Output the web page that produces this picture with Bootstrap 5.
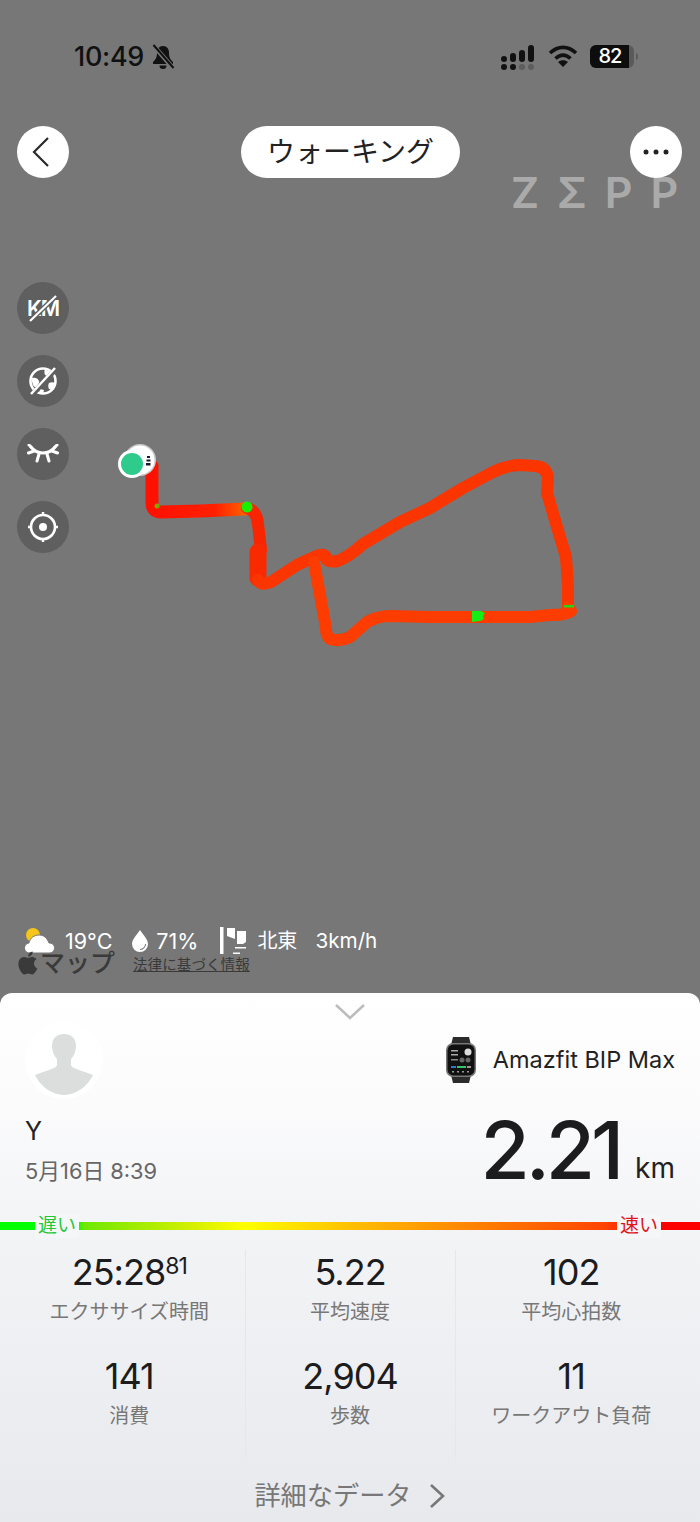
<!DOCTYPE html>
<html lang="ja">
<head>
  <meta charset="UTF-8">
  <title>ウォーキング</title>
  <meta name="viewport" content="width=device-width, initial-scale=1">
  <link href="https://cdn.jsdelivr.net/npm/bootstrap@5.3.0/dist/css/bootstrap.min.css" rel="stylesheet">
  <style>
    body {
      width: 700px;
      height: 1522px;
      overflow: hidden;
      background: #777;
      font-family: Inter, "Noto Sans CJK JP", sans-serif;
      color: #1c1c1e;
    }
    .map-area { position: relative; height: 993px; background: #777; }
    .route-canvas { position: absolute; left: 0; top: 0; }
    .status-row { height: 126px; padding: 40px 62px 0 74px; }
    .clock { font-size: 27px; font-weight: 500; line-height: 34px; color: #111; letter-spacing: -.3px; }
    .bell-icon { margin-left: 7px; }
    .top-row { padding: 0 18px 0 17px; }
    .round-btn { width: 52px; height: 52px; background: #fff; }
    .title-pill { width: 219px; height: 52px; background: #fff; font-size: 28px; color: #222; margin-left: 2px; }
    .back-icon { margin-right: 5px; }
    .zepp-mark {
      position: absolute; left: 511px; top: 168px;
      font-size: 43px; line-height: 48px; font-weight: 600; letter-spacing: 18px;
      color: rgba(255,255,255,.4); white-space: nowrap;
    }
    .side-tools { position: absolute; left: 17px; top: 282px; gap: 21px; }
    .tool-btn { width: 52px; height: 52px; background: #5f5f5f; }
    .map-foot { position: absolute; left: 18px; bottom: 19px; }
    .weather-row { padding-left: 7px; height: 22px; font-size: 21.5px; color: #fff; line-height: 22px; }
    .gap-cloud { margin-right: 10px; }
    .wind-dir { font-size: 20px; margin-left: 9px; }
    .wind-speed { font-size: 20.7px; margin-left: 18px; }
    .gap-drop { margin-left: 19px; margin-right: 7px; }
    .gap-flag { margin-left: 22px; }
    .legal-row { height: 22px; }
    .maps-name { font-size: 25px; line-height: 22px; color: #3a3a3a; font-weight: 500; }
    .legal-link { font-size: 14.600px; line-height: 18px; color: #3a3a3a; text-decoration: underline; margin-left: 18px; margin-top: 4px; }

    .sheet {
      height: 529px;
      position: relative;
      background: linear-gradient(#fff 0, #fbfbfc 110px, #f3f4f6 230px, #e8e9ed 100%);
      border-radius: 12px 12px 0 0;
    }
    .sheet-head { height: 229px; padding: 0 25px; }
    .pull-chev { position: absolute; left: 335px; top: 10px; }
    .avatar-wrap { width: 78px; height: 78px; margin-top: 28px; background: #fff; overflow: hidden; }
    .device-name { font-size: 23.500px; line-height: 30px; color: #222; }
    .device-row { margin-top: 43px; gap: 17px; height: 48px; }
    .user-name { font-size: 25px; line-height: 30px; color: #222; margin-top: 17px; }
    .run-date { font-size: 21.800px; line-height: 28px; color: #666; margin-top: 11px; }
    .distance { font-size: 80px; line-height: 80px; font-weight: 500; letter-spacing: -4.100px; color: #1c1c1e; }
    .distance-unit { font-size: 28px; line-height: 30px; margin-left: 15px; margin-bottom: 7px; color: #222; }
    .dist-row { margin-top: 26px; }
    .speed-bar {
      position: relative; height: 8px;
      background: linear-gradient(90deg, #0f0 0, #0f0 11%, #6fe800 12%, #d8f000 28%, #ff0 35%, #ffc000 50%, #ff7a00 70%, #ff4500 86%, #f00 94%, #f00 100%);
    }
    .speed-tag {
      position: absolute; top: -8px; height: 24px; line-height: 24px; font-size: 19px; padding: 0 3px;
      background: #f5f6f7; border-radius: 3px;
    }
    .stat-grid {
      display: grid; grid-template-columns: 1fr 210px 1fr;
      padding: 20px 13px 0 14px; height: 228px;
    }
    .stat-col { border-right: 1px solid #e6e7ea; }
    .stat-col:last-child { border-right: 0; }
    .stat-item { height: 104px; }
    .stat-num { font-size: 36px; line-height: 44px; color: #1c1c1e; letter-spacing: -1px; }
    .stat-num sup { font-size: 23px; top: -.5em; line-height: 0; margin-left: 0; }
    .stat-label { font-size: 20px; line-height: 28px; color: #777; margin-top: 4px; }
    .more-link { font-size: 26.200px; line-height: 36px; color: #777; gap: 16px; margin-top: 20px; }
  </style>
</head>
<body>

<div class="map-area">
  <!-- route -->
  <svg class="route-canvas" width="700" height="993" viewBox="0 0 700 993" fill="none">
    <defs>
      <linearGradient id="routeFirst" gradientUnits="userSpaceOnUse" x1="150" y1="0" x2="250" y2="0">
        <stop offset="0" stop-color="#ff1000"/><stop offset=".65" stop-color="#ff2000"/><stop offset="1" stop-color="#ff6a00"/>
      </linearGradient>
    </defs>
    <g stroke-linecap="round" stroke-linejoin="round">
      <path d="M152 466 L152 503 Q152 512 161 512 L200 511 L245 509" stroke="url(#routeFirst)" stroke-width="13"/>
      <path d="M247 508 Q257 511 258 524 L261 550" stroke="#f92400" stroke-width="12"/>
      <path d="M258 552 L258 578" stroke="#f92a00" stroke-width="17"/>
      <path d="M258 580 Q261 586 271 582 L297 565 L312 558 Q323 552 326 557 Q326 563 338 561 Q350 556 363 544 L400 522 L430 508 L463 488 L493 472 Q508 465 520 465 L535 466 Q547 467 548 478 L547 493 L557 527 L566 557 L568 585 L568 607" stroke="#fb3500" stroke-width="12"/>
      <path d="M568 607 L571 611 Q567 615 550 615 L530 617 L477 617 L430 617 L390 616 Q378 616 367 622 L350 637 Q340 642 330 639 Q326 636 326 628 L320 595 L314 562" stroke="#fc3c00" stroke-width="12"/>
    </g>
    <circle cx="247" cy="507" r="5.500" fill="#19f000"/>
    <circle cx="157" cy="506" r="2.500" fill="#7ea800"/>
    <path d="M472 611h9l4 2-2 3 1 3-4 2-8 1z" fill="#14ee14"/>
    <path d="M564 605h10v2.500h-10z" fill="#22d814"/>
    <circle cx="140" cy="460" r="16" fill="#c9c9c9"/>
    <circle cx="140" cy="460" r="14.500" fill="#fff"/>
    <path d="M147 456h3v2h-3zM146.500 459.500h4v2h-4zM146 463h4.500v2.500H146z" fill="#1a1a2a"/>
    <circle cx="132" cy="464" r="14" fill="#fff"/>
    <circle cx="132" cy="464" r="11" fill="#2ecb8c"/>
  </svg>

  <!-- status bar -->
  <div class="status-row d-flex justify-content-between position-relative">
    <div class="d-flex align-items-start">
      <span class="clock">10:49</span>
      <svg width="24" height="26" viewBox="0 0 24 26" class="bell-icon mt-1" fill="#111">
        <path d="M12 2c-4 0-6 3-6 7 0 5-2 7-4 9v2h20v-2c-2-2-4-4-4-9 0-4-2-7-6-7z"/>
        <path d="M8.500 21.500a3.500 3.500 0 0 0 7 0z"/>
        <path d="M2 1l20 23" stroke="#777" stroke-width="4.500"/>
        <path d="M2.500 1l20 23" stroke="#111" stroke-width="2"/>
      </svg>
    </div>
    <div class="d-flex align-items-start gap-2">
      <svg width="36" height="26" viewBox="0 0 36 26" class="mt-1 me-1" fill="#111">
        <rect x="1" y="12" width="6" height="6" rx="3"/><rect x="10" y="9" width="6" height="9" rx="3"/>
        <rect x="19" y="6" width="6" height="12" rx="3"/><rect x="28" y="1" width="6" height="17" rx="3"/>
        <rect x="1" y="20" width="6" height="6" rx="3"/><rect x="10" y="20" width="6" height="6" rx="3"/>
        <rect x="19" y="20" width="6" height="6" rx="3" fill="#5d5d5d"/><rect x="28" y="20" width="6" height="6" rx="3" fill="#5d5d5d"/>
      </svg>
      <svg width="30" height="24" viewBox="0 0 30 24" class="mt-1" fill="none" stroke="#111" stroke-width="3.600">
        <path d="M2 9c8-7.500 18-7.500 26 0"/><path d="M7.500 14.500c5-4.500 10-4.500 15 0"/>
        <path d="M15 23l-5-5c3-2.500 7-2.500 10 0z" fill="#111" stroke="none"/>
      </svg>
      <svg width="48" height="24" viewBox="0 0 48 24" class="ms-1 mt-1">
        <rect x="0" y="1" width="44" height="23" rx="6" fill="#5a5a5a"/>
        <path d="M6 1h33v23H6a6 6 0 0 1-6-6V7a6 6 0 0 1 6-6z" fill="#0d0d0d"/>
        <path d="M46 9c1.500.5 2 2 2 3.500s-.5 3-2 3.500z" fill="#5a5a5a"/>
        <text x="20" y="19" text-anchor="middle" font-family="Inter, sans-serif" font-size="20" font-weight="500" letter-spacing="-1" fill="#fff">82</text>
      </svg>
    </div>
  </div>

  <!-- top buttons -->
  <div class="top-row d-flex justify-content-between align-items-center">
    <div class="round-btn rounded-circle d-flex align-items-center justify-content-center">
      <svg width="20" height="32" viewBox="0 0 20 32" class="back-icon" fill="none" stroke="#2a2a2a" stroke-width="2.200"><path d="M17 2 3 16l14 14"/></svg>
    </div>
    <div class="title-pill rounded-pill d-flex align-items-center justify-content-center">ウォーキング</div>
    <div class="round-btn rounded-circle d-flex align-items-center justify-content-center">
      <svg width="26" height="6" viewBox="0 0 26 6" fill="#222"><circle cx="3" cy="3" r="2.500"/><circle cx="13" cy="3" r="2.500"/><circle cx="23" cy="3" r="2.500"/></svg>
    </div>
  </div>
  <div class="zepp-mark">ZΣPP</div>

  <!-- left tools -->
  <div class="side-tools d-flex flex-column">
    <div class="tool-btn rounded-circle d-flex align-items-center justify-content-center">
      <svg width="32" height="30" viewBox="0 0 32 30">
        <text x="16" y="23" text-anchor="middle" font-family="Inter, sans-serif" font-size="21" font-weight="600" letter-spacing="-1" fill="#fff">KM</text>
        <path d="M3 28 29 3" stroke="#5f5f5f" stroke-width="5"/>
        <path d="M3 28 29 3" stroke="#fff" stroke-width="2.200"/>
      </svg>
    </div>
    <div class="tool-btn rounded-circle d-flex align-items-center justify-content-center">
      <svg width="32" height="32" viewBox="0 0 32 32" fill="none">
        <circle cx="16" cy="16" r="12.500" stroke="#fff" stroke-width="2.600"/>
        <path d="M4 13c4-1 7 0 8 3 1 2-1 3-2 5-1 2-3 1-4-1zM18 4c-1 3-1 6 2 7 2 1 5 0 7-2zM22 18c2-1 4-1 6 0l-3 7-3-1c-1-2-1-4 0-6zM13 24l4 1-1 4-4-1z" fill="#fff"/>
        <path d="M5 30 29 4" stroke="#5f5f5f" stroke-width="5"/>
        <path d="M4 29 28 3" stroke="#fff" stroke-width="2.500"/>
      </svg>
    </div>
    <div class="tool-btn rounded-circle d-flex align-items-center justify-content-center">
      <svg width="32" height="20" viewBox="0 0 32 20" fill="none" stroke="#fff" stroke-width="3" stroke-linecap="round">
        <path d="M4 3c6 8 18 8 24 0"/>
        <path d="M4 3 2 1M7 7 1.500 9M12 10l-2 7M20 10l2 7M25 7l5.500 2M28 3l2-2"/>
      </svg>
    </div>
    <div class="tool-btn rounded-circle d-flex align-items-center justify-content-center">
      <svg width="32" height="32" viewBox="0 0 32 32" fill="none" stroke="#fff">
        <circle cx="16" cy="16" r="12" stroke-width="2.600"/>
        <circle cx="16" cy="16" r="4" fill="#fff" stroke="none"/>
        <path d="M16 1v4M16 27v4M1 16h4M27 16h4" stroke-width="2.400"/>
      </svg>
    </div>
  </div>

  <!-- weather + map credit -->
  <div class="map-foot">
    <div class="weather-row d-flex align-items-center">
      <svg width="30" height="28" viewBox="0 0 30 28" class="gap-cloud flex-shrink-0">
        <circle cx="8" cy="8" r="7" fill="#f5c518"/>
        <path d="M5 26a5 5 0 0 1-1-10c1-5 5-8 10-8 5 0 8 3 10 8a5 5 0 0 1 1 10z" fill="#fff" stroke="#777" stroke-width="1"/>
      </svg>
      <span>19°C</span>
      <svg width="18" height="24" viewBox="0 0 18 24" class="gap-drop flex-shrink-0">
        <path d="M9 1c3 5 8 9 8 14a8 8 0 0 1-16 0C1 10 6 6 9 1z" fill="#fff"/>
        <path d="M15 15a6 6 0 0 1-6 6v-1a5 5 0 0 0 5-5z" fill="#777"/>
      </svg>
      <span>71%</span>
      <svg width="28" height="30" viewBox="0 0 28 30" class="gap-flag flex-shrink-0" fill="#fff">
        <rect x="0" y="1" width="3.500" height="27"/>
        <path d="M7 2h8v11l-8-3zM17 5h9v11l-3 2h-6zM15 21h11v1.500H15zM13 26.500h7V28h-7z"/>
      </svg>
      <span class="wind-dir">北東</span>
      <span class="wind-speed">3km/h</span>
    </div>
    <div class="legal-row d-flex align-items-center">
      <svg width="22" height="24" viewBox="0 0 22 24" fill="#3a3a3a" class="flex-shrink-0">
        <path d="M16 12.500c0-3 2.300-4 2.500-4.200-1.400-2-3.500-2.300-4.200-2.300-1.800-.2-3.500 1-4.400 1-.9 0-2.300-1-3.800-1-2 0-3.800 1.100-4.800 2.900-2 3.500-.5 8.800 1.500 11.700 1 1.400 2.100 3 3.700 2.900 1.500-.1 2-1 3.800-1s2.300 1 3.800 1c1.600 0 2.600-1.400 3.600-2.900 1.100-1.600 1.600-3.200 1.600-3.300-.1 0-3.300-1.200-3.300-4.800z"/>
        <path d="M13.500 4c.8-1 1.300-2.300 1.200-3.600-1.100 0-2.500.8-3.300 1.700-.7.800-1.300 2.100-1.200 3.400 1.300.1 2.500-.6 3.300-1.500z"/>
      </svg>
      <span class="maps-name">マップ</span>
      <span class="legal-link">法律に基づく情報</span>
    </div>
  </div>
</div>

<div class="sheet">
  <svg class="pull-chev" width="30" height="18" viewBox="0 0 30 18" fill="none" stroke="#bcbcbc" stroke-width="2.500"><path d="M1 2l14 13L29 2"/></svg>

  <div class="sheet-head d-flex justify-content-between">
    <div>
      <div class="avatar-wrap rounded-circle">
        <svg width="78" height="78" viewBox="0 0 78 78">
          <path d="M39 13c-7 0-12 4-12 12 0 5 2 10 5 13v6c0 3-9 5-22 10 5 11 17 20 29 20s24-9 29-20c-13-5-22-7-22-10v-6c3-3 5-8 5-13 0-8-5-12-12-12z" fill="#dcdede"/>
        </svg>
      </div>
      <div class="user-name">Y</div>
      <div class="run-date">5月16日 8:39</div>
    </div>
    <div class="d-flex flex-column align-items-end">
      <div class="device-row d-flex align-items-center">
        <svg width="30" height="46" viewBox="0 0 30 46">
          <path d="M7 0h16l2 8H5zM5 38h20l-2 8H7z" fill="#2b2b2b"/>
          <rect x="0" y="6" width="30" height="34" rx="7" fill="#777"/>
          <rect x="1.500" y="7.500" width="27" height="31" rx="6" fill="#111"/>
          <circle cx="22" cy="15" r="3.500" fill="#ddd"/>
          <circle cx="16" cy="23" r="2.500" fill="#666"/><circle cx="22" cy="23" r="2.500" fill="#666"/>
          <rect x="5" y="13" width="7" height="1.500" fill="#aaa"/><rect x="5" y="17" width="7" height="1.500" fill="#aaa"/><rect x="5" y="22" width="7" height="1.500" fill="#888"/>
          <rect x="5" y="29" width="5" height="2" fill="#2a7bc0"/><rect x="11" y="29" width="9" height="2" fill="#35c46a"/><rect x="21" y="29" width="4" height="2" fill="#999"/>
          <path d="M6 34h2v1.500H6zM11 34h2v1.500h-2zM16 34h2v1.500h-2zM21 34h2v1.500h-2z" fill="#999"/>
        </svg>
        <span class="device-name">Amazfit BIP Max</span>
      </div>
      <div class="dist-row d-flex align-items-end">
        <span class="distance">2.21</span>
        <span class="distance-unit">km</span>
      </div>
    </div>
  </div>

  <div class="speed-bar">
    <span class="speed-tag" style="left: 35px; color: #1fc93a;">遅い</span>
    <span class="speed-tag" style="left: 617px; color: #e0121a;">速い</span>
  </div>

  <div class="stat-grid text-center">
    <div class="stat-col">
      <div class="stat-item"><div class="stat-num">25:28<sup>81</sup></div><div class="stat-label">エクササイズ時間</div></div>
      <div class="stat-item"><div class="stat-num">141</div><div class="stat-label">消費</div></div>
    </div>
    <div class="stat-col">
      <div class="stat-item"><div class="stat-num">5.22</div><div class="stat-label">平均速度</div></div>
      <div class="stat-item"><div class="stat-num">2,904</div><div class="stat-label">歩数</div></div>
    </div>
    <div class="stat-col">
      <div class="stat-item"><div class="stat-num">102</div><div class="stat-label">平均心拍数</div></div>
      <div class="stat-item"><div class="stat-num">11</div><div class="stat-label">ワークアウト負荷</div></div>
    </div>
  </div>

  <div class="more-link d-flex justify-content-center align-items-center">
    <span>詳細なデータ</span>
    <svg width="18" height="26" viewBox="0 0 18 26" fill="none" stroke="#777" stroke-width="2.600"><path d="M3 2l12 11L3 24"/></svg>
  </div>
</div>

<script src="https://cdn.jsdelivr.net/npm/bootstrap@5.3.0/dist/js/bootstrap.bundle.min.js"></script>
</body>
</html>
